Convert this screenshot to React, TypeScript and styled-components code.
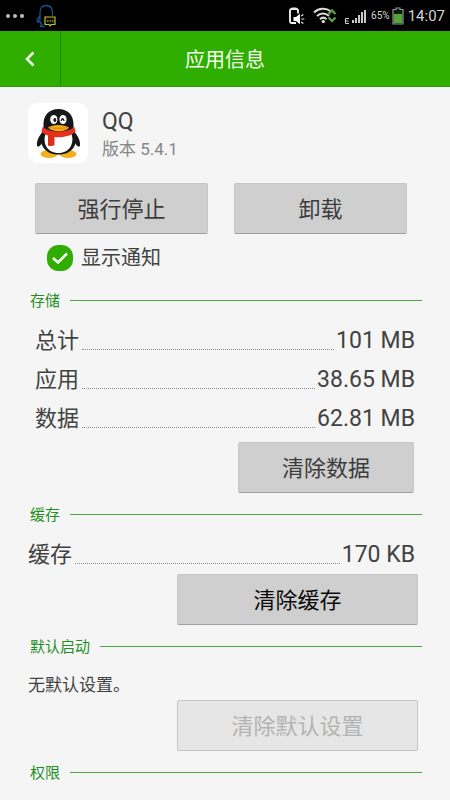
import React from 'react';
import styled, { createGlobalStyle } from 'styled-components';

const GlobalStyle = createGlobalStyle`
  *, *::before, *::after { box-sizing: border-box; }
  body {
    margin: 0;
    background: #f5f5f5;
    color: #424242;
    font-family: Roboto, "Noto Sans CJK SC", sans-serif;
  }
  button, input { font: inherit; }
  h1, h2, p, dl, dt, dd { margin: 0; font-weight: 400; }
`;

const StatusBar = styled.div`
  display: flex;
  align-items: center;
  justify-content: space-between;
  height: 31px;
  padding: 0 5px;
  background: #000;
  color: #d4d4d4;
`;

const StatusGroup = styled.div`
  display: flex;
  align-items: center;
  svg { display: block; }
`;

const NoticeGroup = styled(StatusGroup)`
  gap: 10px;
`;

const ConnectionGroup = styled(StatusGroup)`
  gap: 8px;
  margin-right: 5px;
`;

const Percent = styled.span`
  margin: 0 2px 0 5px;
  font-size: 10px;
  line-height: 16px;
`;

const Clock = styled.time`
  margin-left: 4px;
  font-size: 15px;
  line-height: 20px;
`;

const TitleBar = styled.header`
  display: grid;
  grid-template-columns: 61px 1fr 61px;
  height: 56px;
  background: #2fae00;
  border-bottom: 1px solid #2ba000;
`;

const BackButton = styled.button`
  display: flex;
  align-items: center;
  justify-content: center;
  padding: 0;
  border: 0;
  border-right: 1px solid #228500;
  background: none;
  cursor: pointer;
`;

const Title = styled.h1`
  padding-top: 2px;
  align-self: center;
  text-align: center;
  color: #f4fff0;
  font-size: 20px;
  line-height: 28px;
`;

const Content = styled.main`
  padding: 16px 28px 8px;
`;

const AppSummary = styled.section`
  display: flex;
  gap: 14px;
  height: 60px;
`;

const AppIcon = styled.div`
  width: 60px;
  height: 60px;
  border-radius: 9px;
  background: #fff;
  svg { display: block; }
`;

const AppName = styled.h2`
  padding-top: 5px;
  font-size: 23px;
  line-height: 28px;
`;

const Version = styled.p`
  color: #858585;
  font-size: 17px;
  line-height: 26px;
`;

const Button = styled.button<{ $strong?: boolean }>`
  height: 51px;
  padding: 2px 0 0;
  border: 1px solid #c6c6c6;
  border-bottom-color: #a0a0a0;
  border-radius: 2px;
  background: #cfcfcf;
  color: ${({ $strong }) => ($strong ? '#0a0a0a' : '#3c3c3c')};
  font-size: 22px;
  line-height: 32px;
  cursor: pointer;

  &:disabled {
    border-color: #c6c6c6;
    background: #e6e6e6;
    color: #b3b3b3;
    cursor: default;
  }
`;

const MainActions = styled.div`
  display: grid;
  grid-template-columns: 1fr 1fr;
  gap: 26px;
  margin-top: 20px;
  padding: 0 15px 0 7px;
`;

const NotifyLabel = styled.label`
  display: flex;
  align-items: center;
  gap: 8px;
  width: fit-content;
  height: 47px;
  padding-left: 19px;
  font-size: 20px;
  line-height: 28px;
`;

const CheckHolder = styled.span`
  display: grid;
  > * { grid-area: 1 / 1; }
  svg { pointer-events: none; visibility: hidden; }
  input:checked + svg { visibility: visible; }
`;

const CheckInput = styled.input`
  appearance: none;
  width: 26px;
  height: 26px;
  margin: 0;
  border: 1px solid #2fae00;
  border-radius: 11px;
  &:checked { background: #2fae00; }
`;

const SectionTitle = styled.h2`
  display: flex;
  align-items: center;
  gap: 10px;
  height: 39px;
  padding-left: 2px;
  color: #1f8f1f;
  font-size: 15px;
  line-height: 22px;

  &::after {
    content: '';
    flex: 1;
    height: 1px;
    background: #4da548;
  }
`;

const Stats = styled.dl<{ $inset?: boolean }>`
  padding: 0 7px 0 ${({ $inset }) => ($inset ? 7 : 0)}px;
`;

const StatRow = styled.div`
  display: flex;
  align-items: center;
  height: 39px;
  padding-top: 2px;
  font-size: 22px;
  line-height: 32px;
`;

const Leader = styled.span`
  flex: 1;
  align-self: flex-end;
  margin: 0 2px 9px 3px;
  border-bottom: 1px dotted #8a8a8a;
`;

const StatValue = styled.dd`
  font-size: 23px;
`;

const SectionAction = styled.div<{ $narrow?: boolean }>`
  display: grid;
  grid-template-columns: ${({ $narrow }) => ($narrow ? '176px' : '241px')};
  justify-content: end;
  padding: ${({ $narrow }) => ($narrow ? '5px 8px 2px' : '1px 4px 2px')};
`;

const Note = styled.p`
  height: 33px;
  padding-top: 2px;
  font-size: 17px;
  line-height: 34px;
`;

const MoreDots = () => (
  <svg width="21" height="20" viewBox="0 0 21 20" fill="#bdbdbd" aria-hidden="true">
    <circle cx="3" cy="10" r="2" />
    <circle cx="10" cy="10" r="2" />
    <circle cx="17" cy="10" r="2" />
  </svg>
);

const ChatHeadIcon = () => (
  <svg width="22" height="24" viewBox="0 0 22 24" fill="none" aria-hidden="true">
    <path d="M4 16V9C4 4 6 1.5 10 1.5S16.500 4 16.500 9v3M4 12c-2 2-3.500 5-2.500 6 .5 .5 1.500-.8 2-1.500 .5 2 1.500 3 2.500 4-1.500 .7-2 1.500-1.500 2H9" stroke="#17518c" strokeWidth="1.300" />
    <path d="M9 13h10v7.500h-4l-1 1.500-1-1.500H9z" fill="#101000" stroke="#bdbd38" strokeWidth="1.200" />
    <path d="M11 17h1.500m1 0H15m1 0h1.500" stroke="#d0c850" strokeWidth="1.200" />
    <path d="M9 13h2" stroke="#e04a20" strokeWidth="1.300" />
  </svg>
);

const PhoneSpeakerIcon = () => (
  <svg width="17" height="20" viewBox="0 0 17 20" fill="none" aria-hidden="true">
    <path d="M10 7.500V4.500a1.500 1.500 0 0 0-1.500-1.500h-5A1.500 1.500 0 0 0 2 4.500v11A1.500 1.500 0 0 0 3.500 17H8" stroke="#f5f5f5" strokeWidth="1.800" />
    <path d="M3.500 1.500h5v2h-5z" fill="#e8e8e8" />
    <path d="M5.500 11H8l4-3.200v10.400L8 15H5.500z" fill="#fff" />
    <path d="M13.300 10l2-1.500M13.300 13h3M13.300 16l2 1.500" stroke="#e8e8e8" strokeWidth="1.200" />
  </svg>
);

const WifiIcon = () => (
  <svg width="25" height="18" viewBox="0 0 25 18" fill="none" aria-hidden="true">
    <path d="M1 5.500C6 .8 13 .8 18 4.500M4 9c3.500-3.300 8.500-3.300 12 0M7 12.200c2-1.900 4.500-1.900 6.500 0" stroke="#dcdcdc" strokeWidth="2" />
    <circle cx="10.300" cy="14.500" r="1.600" fill="#e8e8e8" />
    <path d="M15.500 7L19 3.500l3.500 3.500M15.500 10.500L19 14l3.500-3.500" stroke="#5d9c4c" strokeWidth="2.400" />
  </svg>
);

const SignalIcon = () => (
  <svg width="23" height="18" viewBox="0 0 23 18" aria-hidden="true">
    <path d="M6 11.500H2.500V16.500H6M2.500 14H5.500" fill="none" stroke="#cfcfcf" strokeWidth="1" />
    <path d="M9 13h2v3H9zM12 11h2v5h-2zM15 8h2v8h-2zM18 5h2v11h-2zM21 3h2v13h-2z" fill="#cacaca" />
  </svg>
);

const BatteryIcon = () => (
  <svg width="12" height="18" viewBox="0 0 12 18" aria-hidden="true">
    <path d="M4 2.500V1h4v1.500h3V17H1V2.500z" fill="#101810" stroke="#8c9888" strokeWidth="1.200" />
    <path d="M2 7h8v9H2z" fill="#55a53a" />
  </svg>
);

const PenguinIcon = () => (
  <svg width="60" height="60" viewBox="-1 0 60 60" role="img" aria-label="QQ">
    <ellipse cx="20" cy="51" rx="8.500" ry="4" fill="#f2b01e" />
    <ellipse cx="39" cy="51" rx="8.500" ry="4" fill="#f2b01e" />
    <path d="M13.500 29C10 33 7.500 38 8 42.500c.3 2 2.500 1.500 5-2.500zM45.500 29c3.500 4 6 9 5.500 13.500-.3 2-2.500 1.500-5-2.500z" fill="#171717" />
    <path d="M29.500 6C20 6 14.500 12.500 14.500 21v5C11.500 32 11 39 14 44c3 5 8.500 7.500 15.500 7.500S42 49 45 44c3-5 2.500-12-.5-18v-5C44.500 12.500 39 6 29.500 6z" fill="#171717" />
    <path d="M16.500 31c-3 9 1.500 19 13 19s16-10 13-19c-7 3-19 3-26 0z" fill="#fff" />
    <path d="M13.500 24c8 6 24 6 32 0l1 5c-5.500 4-11 5.200-17 5.200-5.500 0-11.500-1.200-17-5.200z" fill="#e6311d" />
    <path d="M19 31.500c2 1 4 1.500 6.500 1.800v8.900c-2.200 1-4.500 1-6.500 .2z" fill="#dc2c1b" />
    <ellipse cx="24.800" cy="16.500" rx="3.600" ry="4.600" fill="#fff" />
    <ellipse cx="34" cy="16.500" rx="3.600" ry="4.600" fill="#fff" />
    <ellipse cx="25.800" cy="17" rx="1.500" ry="2" fill="#171717" />
    <path d="M32.200 18c.2-3 2.400-3 2.800 0" fill="none" stroke="#171717" strokeWidth="1.300" />
    <path d="M19 24.500c4-3.500 16.500-3.500 21 0-3.500 5-17 5-21 0z" fill="#f3ac18" />
    <path d="M20.500 24.500c5 1.200 13 1.200 18 0" fill="none" stroke="#c97f0d" strokeWidth=".7" />
  </svg>
);

interface Stat {
  label: string;
  value: string;
}

const storage: Stat[] = [
  { label: '总计', value: '101 MB' },
  { label: '应用', value: '38.65 MB' },
  { label: '数据', value: '62.81 MB' },
];

const cache: Stat[] = [{ label: '缓存', value: '170 KB' }];

const StatList = ({ items, inset }: { items: Stat[]; inset?: boolean }) => (
  <Stats $inset={inset}>
    {items.map(({ label, value }) => (
      <StatRow key={label}>
        <dt>{label}</dt>
        <Leader aria-hidden="true" />
        <StatValue>{value}</StatValue>
      </StatRow>
    ))}
  </Stats>
);

export default function App() {
  return (
    <>
      <GlobalStyle />
      <StatusBar>
        <NoticeGroup>
          <MoreDots />
          <ChatHeadIcon />
        </NoticeGroup>
        <StatusGroup>
          <ConnectionGroup>
            <PhoneSpeakerIcon />
            <WifiIcon />
          </ConnectionGroup>
          <SignalIcon />
          <Percent>65%</Percent>
          <BatteryIcon />
          <Clock>14:07</Clock>
        </StatusGroup>
      </StatusBar>
      <TitleBar>
        <BackButton type="button" aria-label="返回">
          <svg width="12" height="16" viewBox="0 0 12 16" fill="none" aria-hidden="true">
            <path d="M9.500 1.500L3 8l6.500 6.500" stroke="#effce8" strokeWidth="2.600" />
          </svg>
        </BackButton>
        <Title>应用信息</Title>
      </TitleBar>
      <Content>
        <AppSummary>
          <AppIcon>
            <PenguinIcon />
          </AppIcon>
          <div>
            <AppName>QQ</AppName>
            <Version>版本 5.4.1</Version>
          </div>
        </AppSummary>
        <MainActions>
          <Button type="button">强行停止</Button>
          <Button type="button">卸载</Button>
        </MainActions>
        <NotifyLabel>
          <CheckHolder>
            <CheckInput type="checkbox" defaultChecked />
            <svg width="26" height="26" viewBox="0 0 26 26" fill="none" aria-hidden="true">
              <path d="M6 13l5 4.500 9-9" stroke="#fff" strokeWidth="2.500" />
            </svg>
          </CheckHolder>
          显示通知
        </NotifyLabel>
        <section>
          <SectionTitle>存储</SectionTitle>
          <StatList items={storage} inset />
          <SectionAction $narrow>
            <Button type="button">清除数据</Button>
          </SectionAction>
        </section>
        <section>
          <SectionTitle>缓存</SectionTitle>
          <StatList items={cache} />
          <SectionAction>
            <Button type="button" $strong>清除缓存</Button>
          </SectionAction>
        </section>
        <section>
          <SectionTitle>默认启动</SectionTitle>
          <Note>无默认设置。</Note>
          <SectionAction>
            <Button type="button" disabled>清除默认设置</Button>
          </SectionAction>
        </section>
        <section>
          <SectionTitle>权限</SectionTitle>
        </section>
      </Content>
    </>
  );
}
